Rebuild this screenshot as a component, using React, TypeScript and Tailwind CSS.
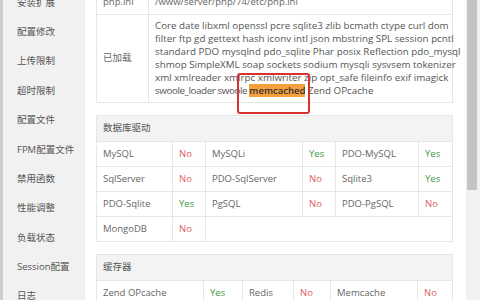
import React from "react";

const font = { fontFamily: '"Open Sans", "Noto Sans CJK SC", sans-serif' };

const side = ["安装扩展", "配置修改", "上传限制", "超时限制", "配置文件", "FPM配置文件", "禁用函数", "性能调整", "负载状态", "Session配置", "日志"];

const Yes = () => <span className="text-[#3f9a3f]">Yes</span>;
const No = () => <span className="text-[#e0605e]">No</span>;

function Cell({ w, children, last }: { w: string; children?: React.ReactNode; last?: boolean }) {
  return (
    <div className={`${w} shrink-0 flex items-center pl-[6px] ${last ? "" : "border-r border-[#e6e6e6]"}`}>{children}</div>
  );
}

export default function App() {
  const dbW = ["w-[76px]", "w-[33px]", "w-[97px]", "w-[33px]", "w-[83px]", "flex-1"];
  const dbRows: React.ReactNode[][] = [
    ["MySQL", <No />, "MySQLi", <Yes />, "PDO-MySQL", <Yes />],
    ["SqlServer", <No />, "PDO-SqlServer", <No />, "Sqlite3", <Yes />],
    ["PDO-Sqlite", <Yes />, "PgSQL", <No />, "PDO-PgSQL", <No />],
  ];
  const cW = ["w-[107px]", "w-[39px]", "w-[51px]", "w-[37px]", "w-[87px]", "flex-1"];
  const cRow: React.ReactNode[] = ["Zend OPcache", <Yes />, "Redis", <No />, "Memcache", <No />];
  return (
    <div className="relative flex h-[300px] w-[480px] overflow-hidden bg-white text-[9.5px] text-[#666]" style={font}>
      <div className="w-[3px] bg-[#cdcdcd]" />
      <div className="w-[82px] bg-[#f1f1f1] flex flex-col -mt-[12px]">
        {side.map((s) => (
          <div key={s} className="h-[29.4px] shrink-0 flex items-center pl-[14px] text-[#555] text-[9.5px]">
            {s}
          </div>
        ))}
      </div>
      <div className="w-[381px] pl-[11px] pr-[13px] flex flex-col">
        <div className="-mt-[11px] border border-[#e6e6e6] flex flex-col">
          <div className="h-[25px] flex border-b border-[#e6e6e6]">
            <Cell w="w-[52px]">php.ini</Cell>
            <Cell w="flex-1" last>/www/server/php/74/etc/php.ini</Cell>
          </div>
          <div className="h-[87px] flex">
            <Cell w="w-[52px]">已加载</Cell>
            <div className="flex-1 min-w-0 pl-[6px] pt-[4px] leading-[13px] whitespace-nowrap text-[#555] text-[9.8px]">
              <div>Core date libxml openssl pcre sqlite3 zlib bcmath ctype curl dom</div>
              <div>filter ftp gd gettext hash iconv intl json mbstring SPL session pcntl</div>
              <div>standard PDO mysqlnd pdo_sqlite Phar posix Reflection pdo_mysql</div>
              <div>shmop SimpleXML soap sockets sodium mysqli sysvsem tokenizer</div>
              <div>xml xmlreader xmlrpc xmlwriter zip opt_safe fileinfo exif imagick</div>
              <div>
                <span className="tracking-[-0.4px]">swoole_loader swoole </span>
                <span className="relative">
                  <span className="bg-[#f5a03c] font-semibold text-[#333] text-[9.5px]">memcached</span>
                  <span className="absolute -left-[12px] -right-[5px] -top-[11px] -bottom-[17px] rounded-[3px] border-2 border-[#d8322c]" />
                </span>{" "}
                Zend OPcache
              </div>
            </div>
          </div>
        </div>

        <div className="mt-[12px] border border-[#e6e6e6] flex flex-col">
          <div className="h-[26px] bg-[#f3f3f3] flex items-center pl-[6px] text-[#555] border-b border-[#e6e6e6]">数据库驱动</div>
          {dbRows.map((r, i) => (
            <div key={i} className="h-[25px] flex border-b border-[#e6e6e6]">
              {r.map((c, j) => (
                <Cell key={j} w={dbW[j]} last={j === 5}>{c}</Cell>
              ))}
            </div>
          ))}
          <div className="h-[24px] flex">
            <Cell w="w-[76px]">MongoDB</Cell>
            <Cell w="w-[33px]"><No /></Cell>
            <div className="flex-1" />
          </div>
        </div>

        <div className="mt-[12px] border border-[#e6e6e6] flex flex-col">
          <div className="h-[26px] bg-[#f3f3f3] flex items-center pl-[6px] text-[#555] border-b border-[#e6e6e6]">缓存器</div>
          <div className="h-[25px] flex">
            {cRow.map((c, j) => (
              <Cell key={j} w={cW[j]} last={j === 5}>{c}</Cell>
            ))}
          </div>
        </div>
      </div>
      <div className="w-[14px] bg-[#f1f1f1] pl-[1px]">
        <div className="h-[190px] w-[10px] bg-[#c4c4c4]" />
      </div>
    </div>
  );
}
